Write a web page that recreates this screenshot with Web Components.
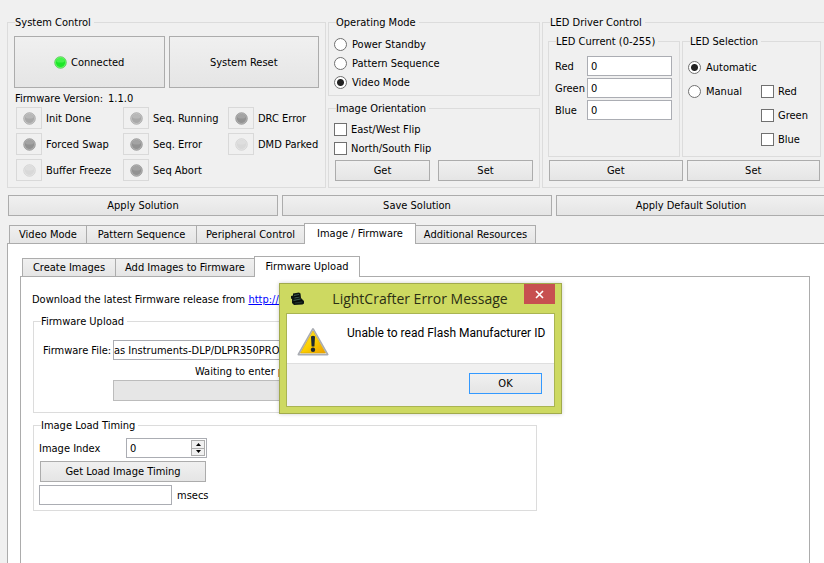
<!DOCTYPE html>
<html lang="en">
<head>
<meta charset="utf-8">
<title>LightCrafter Control</title>
<style>
    html, body {
        margin: 0;
        height: 100%;
        overflow: hidden;
        background: #f0f0f0;
    }
    body {
        font: 11px/15px "DejaVu Sans Condensed", "Open Sans", sans-serif;
        color: #000;
    }
</style>
</head>
<body>
<light-crafter></light-crafter>

<script>
const BUTTON_FACE = 'linear-gradient(#f0f0f0, #e5e5e5)';

// Titled frame
class GroupBox extends HTMLElement {
    constructor() {
        super();
        this.attachShadow({ mode: 'open' }).innerHTML = `
            <style>
                :host { display: block; }
                fieldset {
                    box-sizing: border-box;
                    height: 100%;
                    min-width: 0;
                    margin: 0;
                    padding: var(--pad, 6px);
                    border: 1px solid #dcdcdc;
                }
                legend {
                    padding: 0 3px 0 0;
                    margin-left: var(--legend, 1px);
                }
            </style>
            <fieldset>
                <legend>${this.getAttribute('label')}</legend>
                <slot></slot>
            </fieldset>
        `;
    }
}

class PushButton extends HTMLElement {
    constructor() {
        super();
        this.attachShadow({ mode: 'open' }).innerHTML = `
            <style>
                :host { display: block; height: 21px; }
                button {
                    display: flex;
                    align-items: center;
                    justify-content: center;
                    gap: 4px;
                    box-sizing: border-box;
                    width: 100%;
                    height: 100%;
                    padding: 0;
                    border: 1px solid #acacac;
                    background: ${BUTTON_FACE};
                    font: inherit;
                    color: inherit;
                }
                :host([default]) button { border-color: #3399ff; }
            </style>
            <button type="button"><slot></slot></button>
        `;
    }
}

// Round lamp: on | mid | dark | off
class LedLamp extends HTMLElement {
    constructor() {
        super();
        const shades = {
            on: ['#2fb52f', '#1ee62a', '#6bff6b'],
            mid: ['#8f8f8f', '#a8a8a8', '#c8c8c8'],
            dark: ['#7c7c7c', '#929292', '#b4b4b4'],
            off: ['#c8c8c8', '#d8d8d8', '#e4e4e4']
        };
        const [ring, body, shine] = shades[this.getAttribute('state')];
        this.attachShadow({ mode: 'open' }).innerHTML = `
            <style>
                :host { display: block; width: 13px; height: 13px; }
                svg { display: block; }
            </style>
            <svg width="13" height="13" viewBox="0 0 13 13">
                <circle cx="6.5" cy="6.5" r="5.8" fill="${shine}" stroke="${ring}" stroke-opacity=".6"/>
                <circle cx="6.5" cy="6.5" r="4.6" fill="${body}"/>
                <path d="M2.6 6a3.9 3.9 0 0 1 7.8 0q-3.9 1.2-7.8 0z" fill="${shine}" opacity=".5"/>
            </svg>
        `;
    }
}

class StatusFlag extends HTMLElement {
    constructor() {
        super();
        this.attachShadow({ mode: 'open' }).innerHTML = `
            <style>
                :host { display: flex; align-items: center; gap: 4px; white-space: nowrap; }
                .frame {
                    display: flex;
                    align-items: center;
                    justify-content: center;
                    box-sizing: border-box;
                    width: 26px;
                    height: 22px;
                    border: 1px solid #d9d9d9;
                }
            </style>
            <span class="frame"><led-lamp state="${this.getAttribute('state')}"></led-lamp></span>
            <slot></slot>
        `;
    }
}

class RadioList extends HTMLElement {
    constructor() {
        super();
        const name = this.getAttribute('name');
        const value = this.getAttribute('value');
        const options = this.getAttribute('options').split('|');
        this.attachShadow({ mode: 'open' }).innerHTML = `
            <style>
                :host { display: block; }
                label {
                    display: flex;
                    align-items: center;
                    gap: 5px;
                    height: var(--row, 19px);
                    white-space: nowrap;
                }
                input {
                    appearance: none;
                    flex: none;
                    width: 13px;
                    height: 13px;
                    margin: 0;
                    border: 1px solid #707070;
                    border-radius: 50%;
                    background: #fff;
                }
                input:checked { background: radial-gradient(circle, #222 3px, #fff 4px); }
            </style>
            ${options.map(text => `
                <label><input type="radio" name="${name}" ${text === value ? 'checked' : ''}>${text}</label>
            `).join('')}
        `;
    }
}

class CheckOption extends HTMLElement {
    constructor() {
        super();
        this.attachShadow({ mode: 'open' }).innerHTML = `
            <style>
                :host { display: block; }
                label {
                    display: flex;
                    align-items: center;
                    gap: 4px;
                    height: var(--row, 19px);
                    white-space: nowrap;
                }
                input {
                    appearance: none;
                    flex: none;
                    width: 13px;
                    height: 13px;
                    margin: 0;
                    border: 1px solid #707070;
                    background: #fff;
                }
            </style>
            <label><input type="checkbox"><slot></slot></label>
        `;
    }
}

// Text box with its label before or after it
class TextField extends HTMLElement {
    constructor() {
        super();
        this.attachShadow({ mode: 'open' }).innerHTML = `
            <style>
                :host { display: block; }
                label { display: flex; align-items: center; white-space: nowrap; }
                :host([trailing]) label { flex-direction: row-reverse; justify-content: flex-end; gap: 5px; }
                .text { width: var(--label, auto); flex: none; }
                input {
                    box-sizing: border-box;
                    flex: 1;
                    min-width: 0;
                    height: 20px;
                    padding: 0 var(--inset, 3px);
                    border: 1px solid #abadb3;
                    background: #fff;
                    font: inherit;
                    color: inherit;
                }
                :host([trailing]) input { flex: none; width: var(--field, 133px); }
            </style>
            <label>
                <span class="text"><slot></slot></span>
                <input type="text" value="${this.getAttribute('value') || ''}">
            </label>
        `;
    }
}

class SpinField extends HTMLElement {
    constructor() {
        super();
        this.attachShadow({ mode: 'open' }).innerHTML = `
            <style>
                :host { display: flex; align-items: center; }
                label { width: 87px; }
                .box {
                    display: flex;
                    box-sizing: border-box;
                    width: 81px;
                    height: 20px;
                    padding: 1px;
                    border: 1px solid #abadb3;
                    background: #fff;
                }
                input {
                    appearance: none;
                    flex: 1;
                    min-width: 0;
                    padding: 0 2px;
                    border: 0;
                    font: inherit;
                    color: inherit;
                }
                .steps { display: flex; flex-direction: column; width: 14px; }
                button {
                    display: flex;
                    align-items: center;
                    justify-content: center;
                    flex: 1;
                    padding: 0;
                    border: 1px solid #acacac;
                    background: #f0f0f0;
                }
                button + button { border-top: 0; }
            </style>
            <label for="index"><slot></slot></label>
            <span class="box">
                <input id="index" type="text" role="spinbutton" value="0">
                <span class="steps">
                    <button type="button" aria-label="Up"><svg width="5" height="3"><path d="M0 3L2.5 0L5 3z"/></svg></button>
                    <button type="button" aria-label="Down"><svg width="5" height="3"><path d="M0 0L2.5 3L5 0z"/></svg></button>
                </span>
            </span>
        `;
    }
}

// Tab strip over a pane, the pane's content is slotted
class TabPane extends HTMLElement {
    constructor() {
        super();
        const current = this.getAttribute('current');
        const tabs = this.getAttribute('tabs').split('|');
        const widths = this.getAttribute('widths').split('|');
        this.attachShadow({ mode: 'open' }).innerHTML = `
            <style>
                :host { display: flex; flex-direction: column; }
                .strip {
                    display: flex;
                    align-items: flex-end;
                    height: 20px;
                    margin-left: 2px;
                }
                button {
                    box-sizing: border-box;
                    flex: none;
                    height: 18px;
                    padding: 0;
                    border: 1px solid #acacac;
                    border-width: 1px 0 0 1px;
                    background: ${BUTTON_FACE};
                    font: inherit;
                    color: inherit;
                    white-space: nowrap;
                }
                button:last-child { border-right-width: 1px; }
                button[aria-selected="true"] {
                    height: 21px;
                    margin-bottom: -1px;
                    padding-bottom: 1px;
                    border-right-width: 1px;
                    background: #fff;
                    z-index: 1;
                }
                button[aria-selected="true"] + button { border-left-width: 0; }
                .pane {
                    flex: 1;
                    border: 1px solid #acacac;
                    border-bottom: 0;
                    padding: var(--pane-pad);
                    background: #fff;
                }
            </style>
            <div class="strip" role="tablist">
                ${tabs.map((text, i) => `
                    <button type="button" role="tab" style="width: ${widths[i]}px" aria-selected="${text === current}">${text}</button>
                `).join('')}
            </div>
            <div class="pane"><slot></slot></div>
        `;
    }
}

class MessageWindow extends HTMLElement {
    constructor() {
        super();
        this.attachShadow({ mode: 'open' }).innerHTML = `
            <style>
                :host {
                    display: block;
                    box-sizing: border-box;
                    width: 283px;
                    padding: 0 6px 6px;
                    border: 1px solid #a1aa4c;
                    background: #cdd961;
                    box-shadow: 0 0 4px rgba(0, 0, 0, 0.2);
                }
                header { display: flex; height: 29px; align-items: center; }
                header svg { margin-left: 4px; flex: none; }
                h1 {
                    flex: 1;
                    margin: 0;
                    padding-left: 11px;
                    text-align: center;
                    font: 14px/20px "Open Sans", sans-serif;
                    color: #2b2e14;
                    white-space: nowrap;
                }
                .close {
                    display: flex;
                    align-items: center;
                    justify-content: center;
                    align-self: flex-start;
                    width: 31px;
                    height: 20px;
                    padding: 0;
                    border: 0;
                    background: #c75050;
                }
                .close svg { margin: 0; }
                .body { border: 1px solid #a9b452; background: #f0f0f0; }
                .message {
                    display: flex;
                    gap: 18px;
                    height: 49px;
                    padding-left: 10px;
                    border-bottom: 1px solid #dfdfdf;
                    background: #fff;
                    white-space: nowrap;
                }
                .message svg { margin-top: 13px; flex: none; }
                .message p { margin: 12px 0 0; font: 12px/15px Roboto, sans-serif; }
                .actions { display: flex; justify-content: flex-end; padding: 9px 12px 12px; }
                push-button { width: 73px; }
            </style>
            <header>
                <svg width="15" height="15" viewBox="0 0 15 15">
                    <path d="M3 2.5L9 1.5L10.5 2.5L11 7L14 10V12.500L12.500 13.500L4 14L2 12V8L1 7.500V5L3 4.500z" fill="#0d1613"/>
                    <path d="M4 4.500l5-1M4.500 7l5-1M3.500 9.500l7-1.500" stroke="#3b5a50" fill="none"/>
                    <path d="M5 12l7-1" stroke="#22352e" fill="none"/>
                    <path d="M4.500 5.700l5-.8M3 11l9-1.500" stroke="#050807" fill="none"/>
                </svg>
                <h1>${this.getAttribute('heading')}</h1>
                <button class="close" type="button" aria-label="Close">
                    <svg width="9" height="9" viewBox="0 0 9 9"><path d="M1 1l7 7M8 1l-7 7" stroke="#fff" stroke-width="1.6"/></svg>
                </button>
            </header>
            <div class="body">
                <div class="message">
                    <svg width="32" height="30" viewBox="0 0 32 30">
                        <defs>
                            <linearGradient id="amber" x1="0" y1="0" x2="1" y2="1">
                                <stop offset="0" stop-color="#ffe93a"/>
                                <stop offset=".5" stop-color="#fcd000"/>
                                <stop offset="1" stop-color="#ec9c00"/>
                            </linearGradient>
                        </defs>
                        <path d="M16 2L30.5 27.5H1.5z" fill="#c9ccd2" stroke="#a9acb2" stroke-width="2" stroke-linejoin="round"/>
                        <path d="M16 3L29.5 27H2.5z" fill="#dddfe3"/>
                        <path d="M16 4L28.5 26H3.5z" fill="url(#amber)" stroke="#dba800" stroke-width=".6"/>
                        <path d="M14 9.500q2-1.400 4 0L17.400 19.500h-2.800z" fill="#1d2733"/>
                        <circle cx="16" cy="22.800" r="2.200" fill="#1d2733"/>
                    </svg>
                    <p><slot></slot></p>
                </div>
                <div class="actions"><push-button default>OK</push-button></div>
            </div>
        `;
    }
}

class LightCrafter extends HTMLElement {
    constructor() {
        super();
        this.attachShadow({ mode: 'open' }).innerHTML = `
            <style>
                :host {
                    display: flex;
                    flex-direction: column;
                    box-sizing: border-box;
                    min-height: 100%;
                    margin: 0 -2px 0 7px;
                    padding-top: 15px;
                }
                .panels {
                    display: grid;
                    grid-template-columns: minmax(0, 319fr) minmax(0, 212fr) minmax(0, 284fr);
                    gap: 2px;
                }
                .middle { display: flex; flex-direction: column; gap: 5px; }
                .pair { display: grid; grid-template-columns: 1fr 1fr; gap: 4px; }
                .big push-button { height: 52px; }
                .version { display: flex; gap: 5px; margin: 3px 1px 1px; }
                .flags { display: grid; grid-template-columns: 107px 105px 1fr; row-gap: 4px; margin-left: 2px; }
                .modes { --pad: 5px 5px 3px; --legend: 2px; }
                .orient { --pad: 4px 5px 6px; --legend: 2px; }
                .orient .pair { gap: 8px; margin: 2px 1px 0; }
                .driver { --pad: 4px 4px 6px 5px; --legend: 2px; }
                .driver > .pair { margin: 3px 1px 0; }
                .inner {
                    display: grid;
                    grid-template-columns: minmax(0, 132fr) minmax(0, 139fr);
                    gap: 2px;
                    height: 123px;
                }
                .current { --pad: 7px 7px 0 6px; --legend: 1px; --label: 32px; }
                .current text-field + text-field { margin-top: 2px; }
                .select { --pad: 6px 5px 0; --legend: 2px; --row: 24px; }
                .select .choice { display: grid; grid-template-columns: 73px 1fr; }
                .channels { padding-top: 24px; }
                .solutions { display: grid; grid-template-columns: repeat(3, 1fr); gap: 4px; margin: 7px 0 7px 1px; }
                .outer { flex: 1; --pane-pad: 12px 15px 0 12px; }
                .nested { min-height: 320px; --pane-pad: 15px 11px 0; }
                p { margin: 0; white-space: nowrap; }
                a { color: #00f; }
                .upload, .timing { width: 504px; margin-left: 1px; }
                .upload { margin-top: 7px; --pad: 11px 9px; --legend: -2px; --inset: 0; --label: 70px; }
                .timing { margin-top: 5px; --pad: 5px; --legend: 2px; }
                .status { margin: 4px 0 1px 152px; }
                .bar { height: 19px; margin-left: 70px; border: 1px solid #bcbcbc; background: #e6e6e6; }
                .timing push-button { width: 166px; margin: 3px 0 3px 1px; }
                /* free-floating window over the page */
                message-window { position: absolute; left: 279px; top: 283px; z-index: 2; }
            </style>
            <div class="panels">
                <group-box label="System Control">
                    <div class="pair big">
                        <push-button><led-lamp state="on"></led-lamp>Connected</push-button>
                        <push-button>System Reset</push-button>
                    </div>
                    <div class="version"><span>Firmware Version:</span><span>1.1.0</span></div>
                    <div class="flags">
                        <status-flag state="mid">Init Done</status-flag>
                        <status-flag state="mid">Seq. Running</status-flag>
                        <status-flag state="dark">DRC Error</status-flag>
                        <status-flag state="dark">Forced Swap</status-flag>
                        <status-flag state="dark">Seq. Error</status-flag>
                        <status-flag state="off">DMD Parked</status-flag>
                        <status-flag state="off">Buffer Freeze</status-flag>
                        <status-flag state="dark">Seq Abort</status-flag>
                    </div>
                </group-box>
                <div class="middle">
                    <group-box class="modes" label="Operating Mode">
                        <radio-list name="mode" options="Power Standby|Pattern Sequence|Video Mode" value="Video Mode"></radio-list>
                    </group-box>
                    <group-box class="orient" label="Image Orientation">
                        <check-option>East/West Flip</check-option>
                        <check-option>North/South Flip</check-option>
                        <div class="pair">
                            <push-button>Get</push-button>
                            <push-button>Set</push-button>
                        </div>
                    </group-box>
                </div>
                <group-box class="driver" label="LED Driver Control">
                    <div class="inner">
                        <group-box class="current" label="LED Current (0-255)">
                            <text-field value="0">Red</text-field>
                            <text-field value="0">Green</text-field>
                            <text-field value="0">Blue</text-field>
                        </group-box>
                        <group-box class="select" label="LED Selection">
                            <div class="choice">
                                <radio-list name="leds" options="Automatic|Manual" value="Automatic"></radio-list>
                                <div class="channels">
                                    <check-option>Red</check-option>
                                    <check-option>Green</check-option>
                                    <check-option>Blue</check-option>
                                </div>
                            </div>
                        </group-box>
                    </div>
                    <div class="pair">
                        <push-button>Get</push-button>
                        <push-button>Set</push-button>
                    </div>
                </group-box>
            </div>
            <div class="solutions">
                <push-button>Apply Solution</push-button>
                <push-button>Save Solution</push-button>
                <push-button>Apply Default Solution</push-button>
            </div>
            <tab-pane class="outer" current="Image / Firmware" widths="77|110|108|112|120"
                tabs="Video Mode|Pattern Sequence|Peripheral Control|Image / Firmware|Additional Resources">
                <tab-pane class="nested" current="Firmware Upload" widths="93|139|106"
                    tabs="Create Images|Add Images to Firmware|Firmware Upload">
                    <p>Download the latest Firmware release from <a href="http://www">http://www</a></p>
                    <group-box class="upload" label="Firmware Upload">
                        <text-field value="as Instruments-DLP/DLPR350PROM_v1.1.0.bin">Firmware File:</text-field>
                        <p class="status">Waiting to enter programming mode</p>
                        <div class="bar"></div>
                    </group-box>
                    <group-box class="timing" label="Image Load Timing">
                        <spin-field>Image Index</spin-field>
                        <push-button>Get Load Image Timing</push-button>
                        <text-field trailing>msecs</text-field>
                    </group-box>
                </tab-pane>
            </tab-pane>
            <message-window heading="LightCrafter Error Message">Unable to read Flash Manufacturer ID</message-window>
        `;
    }
}

customElements.define('group-box', GroupBox);
customElements.define('push-button', PushButton);
customElements.define('led-lamp', LedLamp);
customElements.define('status-flag', StatusFlag);
customElements.define('radio-list', RadioList);
customElements.define('check-option', CheckOption);
customElements.define('text-field', TextField);
customElements.define('spin-field', SpinField);
customElements.define('tab-pane', TabPane);
customElements.define('message-window', MessageWindow);
customElements.define('light-crafter', LightCrafter);
</script>
</body>
</html>
